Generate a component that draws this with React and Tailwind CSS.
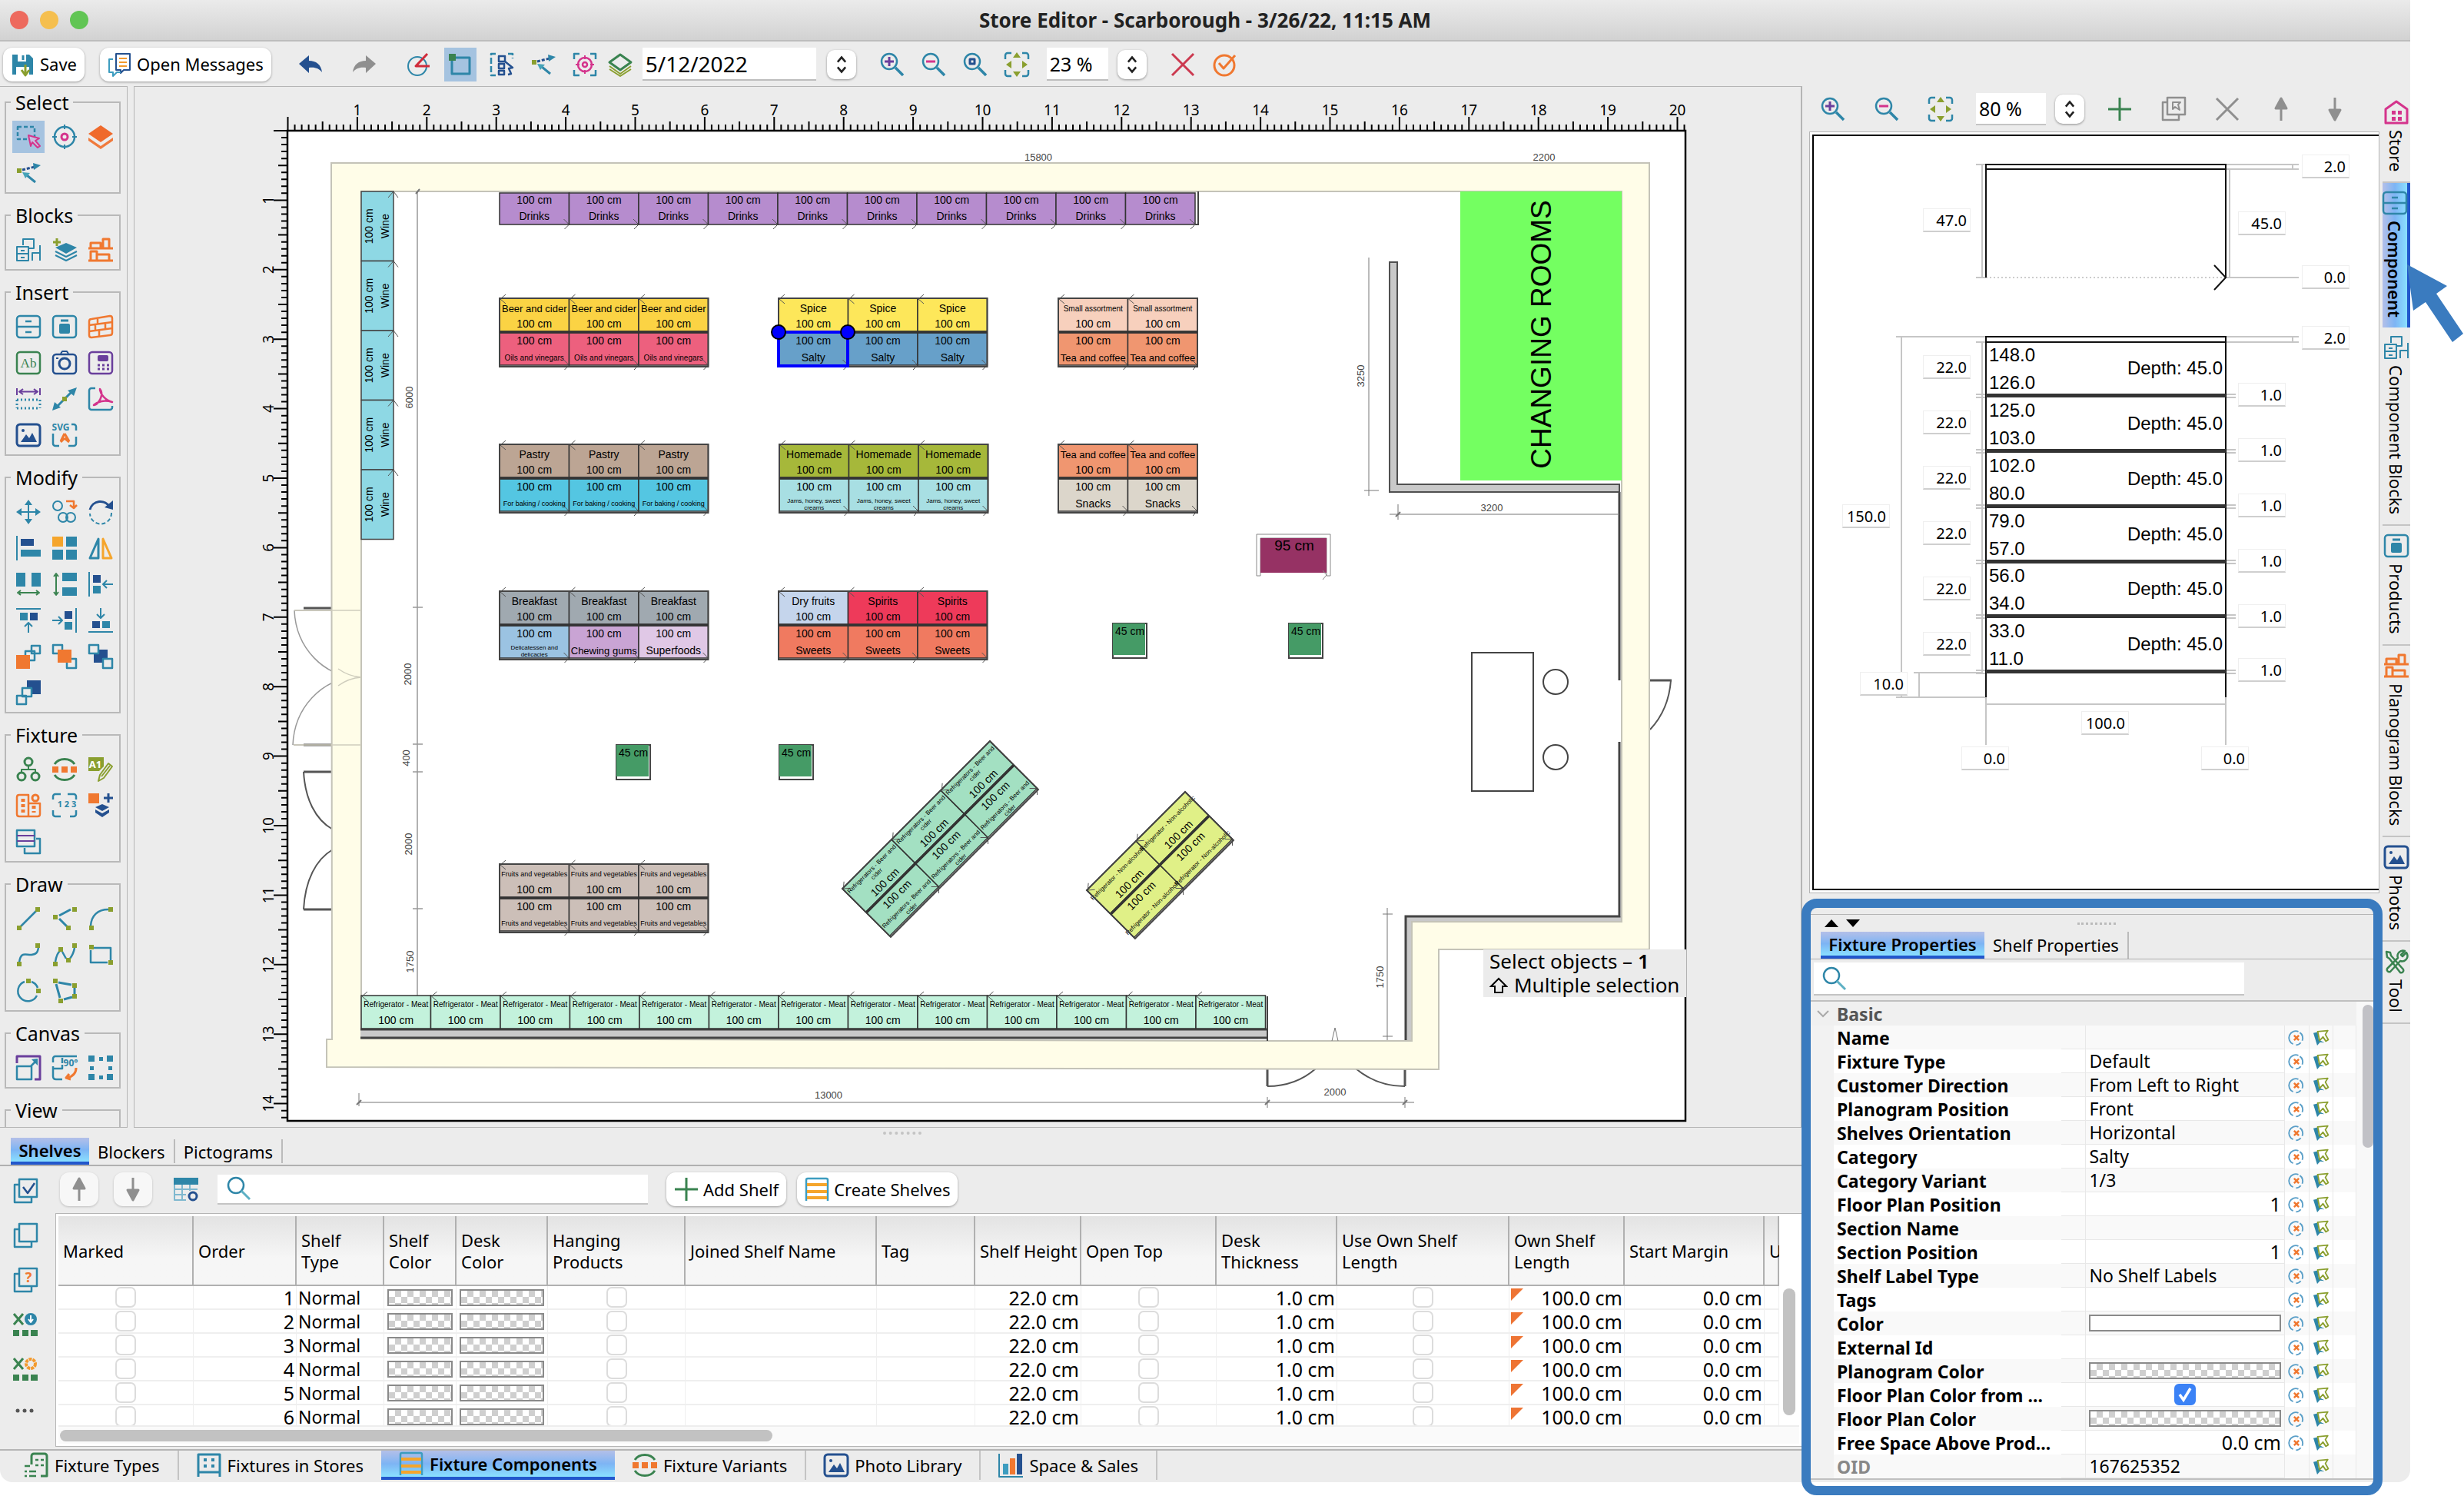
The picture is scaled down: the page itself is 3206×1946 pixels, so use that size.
import { useState } from "react";
import clsx from "clsx";

const TEAL = "#2e86a8";
const NAVY = "#24508f";
const ORANGE = "#f07830";
const GREEN = "#3a8350";
const OLIVE = "#8a9f2f";
const PURPLE = "#6a3f9c";
const PINK = "#d4348c";
const GRAY = "#8f8f8f";

// small square handle used by the drawing tools
const dot = (x, y, c = OLIVE) => <rect x={x - 3} y={y - 3} width="6" height="6" fill={c} stroke="none" />;

const ICONS = {
  save: (
    <>
      <path d="M2 3h22l5 5v21H2z" fill={TEAL} stroke="none" />
      <path d="M9 2h11v10H9zM7 19h17v12H7z" fill="#fff" stroke="none" />
      <path d="M16 4v6" stroke={TEAL} strokeWidth="3" />
      <path d="M19 16v13M14 23l5 7 5-7" stroke={OLIVE} strokeWidth="3" />
    </>
  ),
  messages: (
    <>
      <path d="M11 2h18v21h-8l-4 4v-4h-6z" stroke={NAVY} />
      <path d="M7 9H2v17h5v5l5-5h5" stroke="#3d9dc0" />
      <path d="M15 8h10M15 13h10M15 18h10" stroke="#f39a2e" />
    </>
  ),
  undo: <path d="M1 15L14 4v7c9 0 16 5 17 15-4-5-9-7-17-6v7z" fill="#24508f" stroke="none" />,
  redo: <path d="M31 15L18 4v7C9 11 2 16 1 26c4-5 9-7 17-6v7z" fill={GRAY} stroke="none" />,
  protractor: (
    <>
      <circle cx="14" cy="18" r="12" stroke={TEAL} />
      <path d="M27 2L12 18h18" stroke="#d02b3a" strokeWidth="3" />
    </>
  ),
  grid: (
    <>
      <path d="M5 7h23v21H5z" stroke={TEAL} strokeWidth="3" />
      <rect x="1" y="2" width="9" height="9" fill={GREEN} stroke="none" />
    </>
  ),
  snap: (
    <>
      <path d="M8 2H2v28h6M24 2h6v6" stroke={TEAL} strokeDasharray="8 3" strokeWidth="2.500" />
      <path d="M12 5h8v7h-8zM12 15h7v6h-7zM12 24h7v5h-7z" stroke={NAVY} strokeWidth="2.500" />
      <path d="M20 12l10 8-5 1 3 7-4 1" stroke={NAVY} strokeWidth="2.500" />
    </>
  ),
  arrows: (
    <>
      <path d="M8 12l16-4" stroke={NAVY} strokeDasharray="4 2" strokeWidth="3" />
      <path d="M22 3l10 3-9 6z" fill={TEAL} stroke="none" />
      {dot(4, 13)}
      <path d="M14 19l11 9" stroke={TEAL} strokeWidth="3" />
      <path d="M8 15l10 1-6 7z" fill="#45a3b8" stroke="none" />
    </>
  ),
  focus: (
    <>
      <path d="M2 9V2h7M23 2h7v7M30 23v7h-7M9 30H2v-7" stroke={TEAL} strokeWidth="2.500" />
      <circle cx="16" cy="16" r="9" stroke={PINK} strokeWidth="2.500" />
      <circle cx="16" cy="16" r="3" stroke={PINK} strokeWidth="2.500" />
      <path d="M16 4v5M16 23v5M4 16h5M23 16h5" stroke={PINK} />
    </>
  ),
  layers: (
    <>
      <path d="M16 3l14 10-14 10L2 13z" stroke={GREEN} strokeWidth="3" />
      <path d="M2 18l14 10 14-10M2 22l14 9 14-9" stroke={OLIVE} />
    </>
  ),
  zoomIn: (
    <>
      <circle cx="12" cy="12" r="10" stroke={TEAL} strokeWidth="2.500" />
      <path d="M20 20l10 10" stroke={TEAL} strokeWidth="3.500" />
      <path d="M6 12h12M12 6v12" stroke={PURPLE} strokeWidth="3" />
    </>
  ),
  zoomOut: (
    <>
      <circle cx="12" cy="12" r="10" stroke={TEAL} strokeWidth="2.500" />
      <path d="M20 20l10 10" stroke={TEAL} strokeWidth="3.500" />
      <path d="M6 12h12" stroke={PINK} strokeWidth="3" />
    </>
  ),
  zoomBox: (
    <>
      <circle cx="12" cy="12" r="10" stroke={TEAL} strokeWidth="2.500" />
      <path d="M20 20l10 10" stroke={TEAL} strokeWidth="3.500" />
      <path d="M9 9h6v6H9z" stroke={NAVY} strokeWidth="3" />
    </>
  ),
  fit: (
    <>
      <path d="M1 9V4a3 3 0 013-3h5M23 1h5a3 3 0 013 3v5M31 23v5a3 3 0 01-3 3h-5M9 31H4a3 3 0 01-3-3v-5" stroke={TEAL} strokeWidth="2.500" />
      <path d="M16 0l5 7H11zM16 32l5-7H11zM2 16l7-5v10zM30 16l-7-5v10z" fill={OLIVE} stroke="none" />
    </>
  ),
  cross: <path d="M2 2l28 28M30 2L2 30" stroke="#cc3a50" strokeWidth="3" />,
  crossGray: <path d="M2 2l28 28M30 2L2 30" stroke={GRAY} strokeWidth="3" />,
  check: (
    <>
      <circle cx="16" cy="17" r="13" stroke={ORANGE} strokeWidth="3" />
      <path d="M9 14l6 7L30 4" stroke={ORANGE} strokeWidth="3" />
    </>
  ),
  selectBox: (
    <>
      <path d="M2 3h22v16H2z" stroke={TEAL} strokeDasharray="5 3" strokeWidth="2.500" />
      <path d="M16 14l14 4-5 3 6 7-3 2-7-7-2 5z" fill="#c9bde0" stroke={PINK} />
    </>
  ),
  target: (
    <>
      <circle cx="16" cy="16" r="13" stroke={TEAL} strokeWidth="2.500" />
      <circle cx="16" cy="16" r="4" stroke={PINK} strokeWidth="3" />
      <path d="M16 0v6M16 26v6M0 16h6M26 16h6" stroke={TEAL} />
    </>
  ),
  stack: (
    <>
      <path d="M16 1l16 11-16 11L0 12z" fill="#ef6a2c" stroke="none" />
      <path d="M0 17l16 11 16-11v4L16 32 0 21z" fill="#f07a3c" stroke="none" />
    </>
  ),
  blockFixtures: (
    <>
      <path d="M1 12h15v18H1zM1 21h15M6 17h5M6 26h5" stroke={TEAL} />
      <path d="M9 10V2h14v12h-6M21 30V20h10V10M31 20v10" stroke={TEAL} />
    </>
  ),
  addStack: (
    <>
      <path d="M6 1v10M1 6h10" stroke={OLIVE} strokeWidth="3" />
      <path d="M18 7l14 6-14 8-14-8z" fill={TEAL} stroke="none" />
      <path d="M4 18l14 7 14-7M4 23l14 7 14-7" stroke={TEAL} />
    </>
  ),
  planoBlock: (
    <>
      <path d="M0 14h32M0 30h32" stroke={ORANGE} strokeWidth="3" />
      <path d="M3 13V7h13v6M19 13V2h8v11M3 29V18h8v11M11 29v-7h16v7" stroke={ORANGE} strokeWidth="3" />
    </>
  ),
  cabinet: (
    <>
      <rect x="1" y="2" width="30" height="28" rx="4" stroke={TEAL} strokeWidth="2.500" />
      <path d="M1 16h30M12 9h8M12 23h8" stroke={TEAL} strokeWidth="2.500" />
    </>
  ),
  product: (
    <>
      <rect x="1" y="2" width="30" height="28" rx="4" stroke={TEAL} strokeWidth="2.500" />
      <rect x="9" y="12" width="14" height="13" rx="2" fill={TEAL} stroke="none" />
      <path d="M11 8h10" stroke={TEAL} strokeWidth="3" />
    </>
  ),
  wall: (
    <>
      <path d="M4 6l24-4q3 0 3 3v19q0 3-3 3L4 30q-3 0-3-3V9q0-3 3-3z" stroke={ORANGE} strokeWidth="2.500" />
      <path d="M1 14l30-4M1 22l30-4M12 6v6M22 12v7M9 14v7M14 21v8" stroke={ORANGE} strokeWidth="2.500" />
    </>
  ),
  text: (
    <>
      <rect x="1" y="2" width="30" height="28" rx="4" stroke={GREEN} strokeWidth="2.500" />
      <text x="16" y="22" fontSize="17" textAnchor="middle" fill={GREEN} stroke="none" fontFamily="Liberation Serif, serif">Ab</text>
    </>
  ),
  camera: (
    <>
      <rect x="1" y="5" width="30" height="25" rx="4" stroke={NAVY} strokeWidth="2.500" />
      <path d="M11 4l2-3h6l2 3" stroke={NAVY} />
      <circle cx="16" cy="17" r="7" stroke={NAVY} strokeWidth="3" />
      <path d="M5 10h3" stroke={NAVY} />
    </>
  ),
  register: (
    <>
      <rect x="1" y="2" width="30" height="28" rx="4" stroke={PURPLE} strokeWidth="2.500" />
      <rect x="12" y="6" width="14" height="8" rx="2" fill={PURPLE} stroke="none" />
      <path d="M12 19h15M12 24h15" stroke={PURPLE} strokeWidth="3" strokeDasharray="3 3" />
    </>
  ),
  measure: (
    <>
      <path d="M1 2v9M31 2v9M5 6.500h22M9 3L4 6.500 9 10M23 3l5 3.500L23 10" stroke={PURPLE} />
      <path d="M1 17h30M1 28h30M1 17v11M31 17v11" stroke={TEAL} strokeDasharray="2 3" strokeWidth="3" />
    </>
  ),
  connector: (
    <>
      <path d="M5 27L27 5" stroke={TEAL} strokeWidth="3" />
      <path d="M32 1l-4 11-8-7zM0 31l3-11 8 7z" fill={TEAL} stroke="none" />
      {dot(16, 16)}
    </>
  ),
  pdf: (
    <>
      <path d="M9 2H4a3 3 0 00-3 3v22a3 3 0 003 3h24a3 3 0 003-3v-2" stroke={TEAL} strokeWidth="2.500" />
      <path d="M15 3c6 8-2 20-8 21 5-5 14-7 24-4-8-2-16-10-16-17z" stroke={PINK} strokeWidth="2.500" />
    </>
  ),
  image: (
    <>
      <rect x="1" y="2" width="30" height="28" rx="4" stroke={NAVY} strokeWidth="3" />
      <path d="M6 25l7-10 4 5 4-7 6 12z" fill={NAVY} stroke="none" />
      <circle cx="9" cy="10" r="2" fill={NAVY} stroke="none" />
    </>
  ),
  svg: (
    <>
      <text x="11" y="10" fontSize="12" textAnchor="middle" fontWeight="700" fill={TEAL} stroke="none" fontFamily="Noto Sans, sans-serif">SVG</text>
      <path d="M25 2h3a3 3 0 013 3v5M31 18v9a3 3 0 01-3 3h-7M9 30H4a3 3 0 01-3-3V14" stroke={TEAL} strokeWidth="2.500" />
      <path d="M16 14l-5 10M16 14l6 10M16 20l-5 5M16 20l6 5" stroke={ORANGE} strokeWidth="3" />
    </>
  ),
  move: (
    <>
      <path d="M16 4v24M4 16h24" stroke={TEAL} />
      <path d="M16 0l5 7H11zM16 32l5-7H11zM0 16l7-5v10zM32 16l-7-5v10z" fill={TEAL} stroke="none" />
    </>
  ),
  duplicate: (
    <>
      <circle cx="7" cy="8" r="6" stroke={TEAL} />
      <circle cx="14" cy="23" r="6" stroke={TEAL} />
      <circle cx="24" cy="23" r="6" stroke={TEAL} />
      <path d="M18 2h10v8M23 7l5 4 4-4" stroke={ORANGE} strokeWidth="2.500" />
    </>
  ),
  rotate: (
    <>
      <path d="M2 13A14 14 0 0128 10" stroke={NAVY} strokeWidth="3" />
      <path d="M32 1v12l-11-3z" fill={NAVY} stroke="none" />
      <path d="M30 17A14 14 0 012 18" stroke={TEAL} strokeDasharray="5 3" />
    </>
  ),
  alignLeft: (
    <>
      <path d="M1 0v32" stroke={TEAL} />
      <rect x="6" y="4" width="17" height="9" fill={NAVY} stroke="none" />
      <rect x="6" y="18" width="26" height="9" fill={TEAL} stroke="none" />
    </>
  ),
  tiles: (
    <>
      <rect x="0" y="1" width="14" height="13" fill="#f5a52c" stroke="none" />
      <path d="M18 1h14v13H18zM0 18h14v13H0zM18 18h14v13H18z" fill={TEAL} stroke="none" />
    </>
  ),
  mirror: (
    <>
      <path d="M13 4v25H2z" stroke={TEAL} strokeWidth="3" />
      <path d="M19 4v25h11z" stroke="#f5a52c" strokeWidth="3" />
    </>
  ),
  spreadH: (
    <>
      <path d="M0 1h12v18H0zM20 1h12v18H20z" fill={TEAL} stroke="none" />
      <path d="M4 27h24M6 24l-4 3 4 3M26 24l4 3-4 3" stroke={GREEN} />
    </>
  ),
  spreadV: (
    <>
      <path d="M13 1h19v11H13zM13 20h19v11H13z" fill={TEAL} stroke="none" />
      <path d="M5 4v24M2 6l3-4 3 4M2 26l3 4 3-4" stroke={GREEN} />
    </>
  ),
  pushLeft: (
    <>
      <path d="M1 0v32M32 16H20M24 11l-5 5 5 5" stroke={TEAL} />
      <rect x="6" y="4" width="10" height="10" fill={NAVY} stroke="none" />
      <rect x="6" y="18" width="10" height="10" fill={TEAL} stroke="none" />
    </>
  ),
  pushTop: (
    <>
      <path d="M0 1h32M16 32V20M11 24l5-5 5 5" stroke={TEAL} />
      <rect x="5" y="6" width="10" height="10" fill={TEAL} stroke="none" />
      <rect x="18" y="6" width="10" height="10" fill={NAVY} stroke="none" />
    </>
  ),
  pushRight: (
    <>
      <path d="M31 0v32M0 16h12M8 11l5 5-5 5" stroke={TEAL} />
      <rect x="16" y="4" width="10" height="10" fill={NAVY} stroke="none" />
      <rect x="16" y="18" width="10" height="10" fill={TEAL} stroke="none" />
    </>
  ),
  pushBottom: (
    <>
      <path d="M0 31h32M16 0v12M11 8l5 5 5-5" stroke={TEAL} />
      <rect x="5" y="17" width="10" height="9" fill={NAVY} stroke="none" />
      <rect x="18" y="17" width="10" height="9" fill={TEAL} stroke="none" />
    </>
  ),
  toFront: (
    <>
      <path d="M20 2h11v10H20zM12 9h12v12H12z" stroke={TEAL} strokeWidth="2.500" />
      <rect x="0" y="14" width="18" height="18" fill={ORANGE} stroke="none" />
    </>
  ),
  forward: (
    <>
      <path d="M1 1h12v11H1zM19 19h12v12H19z" stroke={TEAL} strokeWidth="2.500" />
      <rect x="7" y="7" width="18" height="17" fill={ORANGE} stroke="none" />
    </>
  ),
  backward: (
    <>
      <rect x="7" y="7" width="18" height="17" fill={NAVY} stroke="none" />
      <path d="M1 1h12v11H1zM19 19h12v12H19z" stroke={TEAL} fill="#ececec" strokeWidth="2.500" />
    </>
  ),
  toBack: (
    <>
      <rect x="14" y="0" width="18" height="18" fill={NAVY} stroke="none" />
      <path d="M8 10h12v11H8zM1 20h12v11H1z" stroke={TEAL} fill="#ececec" strokeWidth="2.500" />
    </>
  ),
  hierarchy: (
    <>
      <circle cx="16" cy="6" r="5" stroke={GREEN} strokeWidth="3" />
      <circle cx="7" cy="25" r="5" stroke={GREEN} strokeWidth="3" />
      <circle cx="25" cy="25" r="5" stroke={GREEN} strokeWidth="3" />
      <path d="M16 11v5M7 20v-4h18v4" stroke={GREEN} />
    </>
  ),
  variants: (
    <>
      <path d="M3 9a15 13 0 0126 0M3 23a15 13 0 0026 0" stroke={GREEN} strokeWidth="3" />
      <path d="M0 12h8v8H0zM12 12h8v8h-8zM24 12h8v8h-8z" fill={ORANGE} stroke="none" />
    </>
  ),
  rename: (
    <>
      <path d="M0 0h20v12l-6 6H0z" fill={OLIVE} stroke="none" />
      <text x="9" y="14" fontSize="13" fontWeight="700" textAnchor="middle" fill="#fff" stroke="none" fontFamily="Noto Sans, sans-serif">A1</text>
      <path d="M26 8L15 23l-2 8 7-4L31 12z" stroke={OLIVE} fill="#ececec" />
      <path d="M28 11L17 25" stroke={OLIVE} />
    </>
  ),
  building: (
    <>
      <path d="M4 2h12v28H4q-3 0-3-3V5q0-3 3-3zM16 13h15v14q0 3-3 3H16" stroke={ORANGE} strokeWidth="2.500" />
      <path d="M9 7v18" stroke={ORANGE} strokeWidth="5" strokeDasharray="4 3" />
      <path d="M23 16v9" stroke={ORANGE} strokeWidth="5" strokeDasharray="4 3" />
      <circle cx="25" cy="6" r="4" stroke={ORANGE} strokeWidth="3" />
    </>
  ),
  numbers: (
    <>
      <path d="M1 8V4a3 3 0 013-3h7M20 1h8a3 3 0 013 3v4M31 22v5a3 3 0 01-3 3h-5M11 30H4a3 3 0 01-3-3v-5" stroke={TEAL} strokeWidth="2.500" />
      <text x="19" y="18" fontSize="11" textAnchor="middle" fontWeight="700" fill={TEAL} stroke="none" fontFamily="Noto Sans, sans-serif">1 2 3</text>
    </>
  ),
  addLayer: (
    <>
      <rect x="0" y="0" width="14" height="13" fill={ORANGE} stroke="none" />
      <path d="M26 0v12M20 6h12" stroke={NAVY} strokeWidth="3" />
      <path d="M18 14l9 4-9 5-9-5zM9 21l9 5 9-5v4l-9 6-9-6z" fill={NAVY} stroke="none" />
    </>
  ),
  copyFixture: (
    <>
      <path d="M1 1h23v21H1z" stroke={TEAL} strokeWidth="2.500" />
      <path d="M1 8h23M1 15h23" stroke={PURPLE} />
      <path d="M26 12h5v19H11v-7" stroke={TEAL} strokeWidth="2.500" />
    </>
  ),
  line: <><path d="M6 26L26 6" stroke={TEAL} strokeWidth="2.500" />{dot(4, 28)}{dot(28, 4)}</>,
  polyline: <><path d="M9 12l15-8M9 16l10 10" stroke={TEAL} strokeWidth="3" />{dot(4, 14)}{dot(29, 4)}{dot(21, 28)}</>,
  arc: <><path d="M3 25C4 12 12 4 26 4" stroke={TEAL} strokeWidth="2.500" />{dot(4, 28)}{dot(29, 4)}</>,
  curve: <><path d="M4 26c2-16 10-9 16-10 8-1 8-5 9-9" stroke={TEAL} strokeWidth="2.500" />{dot(4, 28)}{dot(28, 4)}</>,
  spline: <><path d="M4 25c1-6 2-11 6-14M13 12l5 9M23 21c3-4 5-8 6-14" stroke={TEAL} strokeWidth="2.500" />{dot(4, 28)}{dot(11, 9)}{dot(21, 23)}{dot(29, 4)}</>,
  rect: <><path d="M3 10v16h22M7 7h22v16" stroke={TEAL} strokeWidth="2.500" />{dot(4, 6)}{dot(29, 26)}</>,
  circle: <><path d="M11 4a13 13 0 1016 18M20 4a13 13 0 018 8" stroke={TEAL} strokeWidth="2.500" />{dot(16, 3)}{dot(29, 16)}</>,
  polygon: <><path d="M8 5l17 3M5 7l5 18M15 27l11-3M29 12v10" stroke={TEAL} strokeWidth="3" />{dot(4, 3)}{dot(29, 9)}{dot(29, 23)}{dot(11, 29)}</>,
  resize: (
    <>
      <path d="M1 10V1h30v30h-7" stroke={PURPLE} strokeWidth="3" />
      <path d="M1 14h19v17H1zM19 14l7-7" stroke={TEAL} strokeWidth="2.500" />
      <path d="M28 4v9l-8-8z" fill={TEAL} stroke="none" />
    </>
  ),
  rotate90: (
    <>
      <path d="M1 9V4a3 3 0 013-3h28M13 3v7M1 17h12v-5M1 17v10q0 4 4 4h8M1 17v-3" stroke={TEAL} strokeWidth="2.500" />
      <text x="24" y="14" fontSize="12" fontWeight="700" textAnchor="middle" fill={TEAL} stroke="none" fontFamily="Noto Sans, sans-serif">90°</text>
      <path d="M31 16c0 7-4 11-11 13M22 24l-4 5 6 2" stroke={ORANGE} strokeWidth="3" />
    </>
  ),
  handles: (
    <>
      <path d="M0 0h8v8H0zM24 0h8v8h-8zM0 24h8v8H0zM24 24h8v8h-8z" fill={TEAL} stroke="none" />
      <path d="M14 2h5v5h-5zM2 14h5v5H2zM26 14h5v5h-5zM14 26h5v5h-5z" fill={TEAL} stroke="none" />
    </>
  ),
  up: <path d="M16 31V14M16 2l-7 13h14z" stroke={GRAY} strokeWidth="3" fill={GRAY} />,
  down: <path d="M16 1v17M16 30L9 17h14z" stroke={GRAY} strokeWidth="3" fill={GRAY} />,
  plus: <path d="M16 1v30M1 16h30" stroke={GREEN} strokeWidth="3" />,
  copyGray: (
    <>
      <path d="M8 1h23v22H8zM8 7H2v23h21v-6" stroke={GRAY} strokeWidth="2.500" />
      <path d="M15 7v9l3-3 6 4-2-7 3-3z" stroke={GRAY} />
    </>
  ),
  house: (
    <>
      <path d="M2 30V12L16 2l14 10v18z" stroke={PINK} strokeWidth="3" />
      <path d="M10 14h5v5h-5zM18 14h5v5h-5zM10 22h5v5h-5zM18 22h5v5h-5z" fill={PINK} stroke="none" />
    </>
  ),
  tools: (
    <>
      <path d="M3 3l5 1 1 4 16 18a3 3 0 01-4 4L7 12 4 10z" stroke={GREEN} strokeWidth="2.500" />
      <path d="M29 4l-5 5-2-2 5-5a7 7 0 00-9 9L4 25a3 3 0 004 4l13-14a7 7 0 009-9z" stroke={GREEN} strokeWidth="2.500" />
    </>
  ),
  pageCheck: (
    <>
      <path d="M8 1h23v23H8zM8 8H2v23h22v-6" stroke={TEAL} strokeWidth="2.500" />
      <path d="M13 11l6 8 9-13" stroke={NAVY} strokeWidth="2.500" />
    </>
  ),
  page: <path d="M8 1h23v23H8zM8 8H2v23h22v-6" stroke={TEAL} strokeWidth="2.500" />,
  pageHelp: (
    <>
      <path d="M8 1h23v23H8zM8 8H2v23h22v-6" stroke={TEAL} strokeWidth="2.500" />
      <text x="20" y="19" fontSize="18" fontWeight="700" textAnchor="middle" fill={ORANGE} stroke="none" fontFamily="Noto Sans, sans-serif">?</text>
    </>
  ),
  excelImport: (
    <>
      <path d="M1 2l12 14M13 2L1 16" stroke={GREEN} strokeWidth="3" />
      <circle cx="23" cy="9" r="8" fill={TEAL} stroke="none" />
      <path d="M23 4v8M20 9l3 4 3-4" stroke="#fff" />
      <path d="M0 23h8v8H0zM12 23h8v8h-8zM23 23h9v8h-9z" fill={GREEN} stroke="none" />
    </>
  ),
  excelConfig: (
    <>
      <path d="M1 2l12 14M13 2L1 16" stroke={GREEN} strokeWidth="3" />
      <circle cx="23" cy="9" r="6" stroke="#f39a2e" strokeWidth="4" strokeDasharray="4 1" />
      <path d="M0 23h8v8H0zM12 23h8v8h-8zM23 23h9v8h-9z" fill={GREEN} stroke="none" />
    </>
  ),
  dots: (
    <g fill="#555" stroke="none">
      <circle cx="6" cy="12" r="2.500" />
      <circle cx="15" cy="12" r="2.500" />
      <circle cx="24" cy="12" r="2.500" />
    </g>
  ),
  tableConfig: (
    <>
      <rect x="0" y="1" width="32" height="9" fill={TEAL} stroke="none" />
      <path d="M1 10v20h15M1 16h30M1 23h15M11 10v20M21 10v8" stroke="#7fb8cf" />
      <circle cx="25" cy="25" r="5" stroke={NAVY} strokeWidth="3" />
    </>
  ),
  search: (
    <>
      <circle cx="12" cy="12" r="10" stroke={TEAL} strokeWidth="2.500" />
      <path d="M19 19l11 11" stroke="#5db0c4" strokeWidth="3" />
    </>
  ),
  shelf: (
    <>
      <path d="M2 31V4a2 2 0 012-2h24a2 2 0 012 2v27" stroke="#3d9dc0" strokeWidth="2.500" />
      <path d="M3 10h26M3 19h26M3 27h26" stroke="#f5a52c" strokeWidth="4" />
    </>
  ),
  fixtureTypes: (
    <>
      <path d="M10 15V4a3 3 0 013-3h14a3 3 0 013 3v26h-8" stroke={GREEN} strokeWidth="3" />
      <path d="M15 9h4M22 9h4M15 16h4M22 16h4M1 17h7M1 24h3M7 24h9M1 30h3M7 30h9" stroke={GREEN} strokeWidth="2.500" />
    </>
  ),
  fixturesStores: (
    <>
      <path d="M2 31V2h28v29M2 25h28" stroke={TEAL} strokeWidth="3" />
      <path d="M9 9h4M19 9h4M9 17h4M19 17h4" stroke={TEAL} strokeWidth="4" />
    </>
  ),
  chart: (
    <>
      <path d="M1 1v30h31" stroke={TEAL} />
      <rect x="6" y="14" width="7" height="14" fill="#3d9dc0" stroke="none" />
      <rect x="15" y="7" width="7" height="21" fill={ORANGE} stroke="none" />
      <rect x="24" y="1" width="7" height="27" fill={NAVY} stroke="none" />
    </>
  ),
  reset: (
    <>
      <path d="M9 29A14 14 0 0120 3M23 5a14 14 0 015 17M25 26a14 14 0 01-10 5" stroke="#5a9fc8" strokeWidth="3" />
      <path d="M11 11l10 10M21 11L11 21" stroke={ORANGE} strokeWidth="4" />
    </>
  ),
  pick: (
    <>
      <path d="M0 6l9-2 2 16 12 6-9-1-6 7z" fill={TEAL} stroke="none" />
      <path d="M9 3l21-2-5 8 6 11-5 3-6-9-7 8z" fill="#fff" stroke={OLIVE} strokeWidth="3" />
    </>
  ),
};

function Icon({ name, className = "size-8" }) {
  return (
    <svg viewBox="0 0 32 32" fill="none" strokeWidth="2" strokeLinejoin="round" aria-hidden="true" className={clsx("shrink-0 overflow-visible", className)}>
      {ICONS[name]}
    </svg>
  );
}

function IconButton({ name, selected, label = name, className = "h-11 w-[42px]" }) {
  return (
    <button aria-label={label} className={clsx("flex shrink-0 items-center justify-center", className, selected && "bg-[#a5c3e0]")}>
      <Icon name={name} />
    </button>
  );
}

function PushButton({ icon, children }) {
  return (
    <button className="flex h-11 shrink-0 items-center gap-1.5 rounded-xl bg-white px-2.5 text-[22px] shadow-[0_1px_3px_rgba(0,0,0,0.35)]">
      {icon && <Icon name={icon} />}
      {children}
    </button>
  );
}

function Stepper({ label }) {
  return (
    <button aria-label={label} className="flex h-[38px] w-[38px] shrink-0 items-center justify-center rounded-[10px] bg-white shadow-[0_1px_3px_rgba(0,0,0,0.4)]">
      <svg viewBox="0 0 16 28" className="h-6 w-4" fill="none" stroke="#222" strokeWidth="3">
        <path d="M2 10l6-7 6 7M2 18l6 7 6-7" />
      </svg>
    </button>
  );
}

/* ---------- top bars ---------- */

function TitleBar() {
  return (
    <header className="flex h-[54px] shrink-0 items-center border-b-2 border-[#bdbdbd] bg-linear-to-b from-[#ebebeb] to-[#d2d2d2] px-[13px]">
      <div className="flex flex-1 gap-[15px]">
        <button aria-label="Close" className="size-6 rounded-full bg-[#ed6a5e]" />
        <button aria-label="Minimize" className="size-6 rounded-full bg-[#f5bf4f]" />
        <button aria-label="Zoom" className="size-6 rounded-full bg-[#61c554]" />
      </div>
      <h1 className="text-[26px] font-bold text-[#222]">Store Editor - Scarborough - 3/26/22, 11:15 AM</h1>
      <div className="flex-1" />
    </header>
  );
}

function MainToolbar() {
  const [date, setDate] = useState("5/12/2022");
  const [zoom, setZoom] = useState("23 %");
  return (
    <div className="flex h-[58px] shrink-0 items-center pt-px pl-1">
      <PushButton icon="save">Save</PushButton>
      <div className="w-5" />
      <PushButton icon="messages">Open Messages</PushButton>
      <div className="flex gap-7 pl-[30px]">
        <IconButton name="undo" />
        <IconButton name="redo" />
      </div>
      <div className="flex gap-3 pl-[29px]">
        {["protractor", "grid", "snap", "arrows", "focus"].map((n) => (
          <IconButton key={n} name={n} selected={n === "grid"} />
        ))}
      </div>
      <IconButton name="layers" className="h-11 w-[50px]" />
      <input aria-label="Date" value={date} onChange={(e) => setDate(e.target.value)} className="mr-3.5 ml-1 h-[43px] w-[226px] border-b-2 border-[#bdbdbd] bg-white px-1 text-[28px]" />
      <Stepper label="Change date" />
      <div className="flex gap-3 pr-[18px] pl-[26px]">
        {["zoomIn", "zoomOut", "zoomBox", "fit"].map((n) => (
          <IconButton key={n} name={n} />
        ))}
      </div>
      <input aria-label="Zoom" value={zoom} onChange={(e) => setZoom(e.target.value)} className="mr-3 h-[43px] w-20 border-b-2 border-[#bdbdbd] bg-white px-1 text-[25px]" />
      <Stepper label="Change zoom" />
      <div className="flex gap-3 pl-[26px]">
        <IconButton name="cross" />
        <IconButton name="check" />
      </div>
    </div>
  );
}

/* ---------- left palette ---------- */

const PALETTE = [
  { title: "Select", icons: ["selectBox", "target", "stack", "arrows"] },
  { title: "Blocks", icons: ["blockFixtures", "addStack", "planoBlock"] },
  { title: "Insert", icons: ["cabinet", "product", "wall", "text", "camera", "register", "measure", "connector", "pdf", "image", "svg"] },
  {
    title: "Modify",
    icons: ["move", "duplicate", "rotate", "alignLeft", "tiles", "mirror", "spreadH", "spreadV", "pushLeft", "pushTop", "pushRight", "pushBottom", "toFront", "forward", "backward", "toBack"],
  },
  { title: "Fixture", icons: ["hierarchy", "variants", "rename", "building", "numbers", "addLayer", "copyFixture"] },
  { title: "Draw", icons: ["line", "polyline", "arc", "curve", "spline", "rect", "circle", "polygon"] },
  { title: "Canvas", icons: ["resize", "rotate90", "handles"] },
  { title: "View", icons: ["zoomBox", "grid", "layers"] },
];

function Palette() {
  return (
    <aside className="mr-2 flex w-[166px] shrink-0 flex-col gap-3 overflow-hidden border-t border-r border-b border-[#b5b5b5] pt-1 pr-2 pl-1.5">
      {PALETTE.map((group) => (
        <fieldset key={group.title} className="shrink-0 border-2 border-[#b9b9b9] pb-1">
          <legend className="ml-1.5 px-1.5 text-[25px] leading-8">{group.title}</legend>
          <div className="grid grid-cols-[42px_42px_42px] gap-[5px] pt-2 pl-2">
            {group.icons.map((n) => (
              <IconButton key={n} name={n} selected={n === "selectBox"} className="size-[42px]" />
            ))}
          </div>
        </fieldset>
      ))}
    </aside>
  );
}

/* ---------- floor plan ---------- */

const M = 90.5; // one metre on screen

// cell: [label, fill, font size, second line]
function Cells({ y, h, cells, flip, labelY, cmY }) {
  return cells.map(([label, fill, size, more], i) => (
    <g key={i} transform={`translate(${i * M} ${y})`}>
      <rect width={M} height={h} fill={fill} stroke="#333" strokeWidth="1.500" />
      <path d={flip ? `M${M - 7} ${h - 7}l7 7-6 6` : "M8 -5l-7 6 7 6"} fill="none" stroke="#555" />
      <text x={M / 2} y={cmY} fontSize="14">100 cm</text>
      <text x={M / 2} y={more ? labelY - 4 : labelY} fontSize={size}>{label}</text>
      {more && <text x={M / 2} y={labelY + 5} fontSize={size}>{more}</text>}
    </g>
  ));
}

function Gondola({ x, y, top, bottom, angle = 0 }) {
  const w = top.length * M;
  return (
    <g transform={`translate(${x} ${y}) rotate(${angle})`}>
      <Cells y={0} h={43} cells={top} labelY={13} cmY={33} />
      <Cells y={45} h={42} cells={bottom} flip labelY={32} cmY={10} />
      <rect width={w} height="89" fill="none" stroke="#444" strokeWidth="2" />
      <path d={`M0 44h${w}`} stroke="#333" strokeWidth="3" />
    </g>
  );
}

const fill = (n, cell) => Array.from({ length: n }, () => cell);

const GONDOLAS = [
  { x: 650, y: 388, top: fill(3, ["Beer and cider", "#fbd344", 13]), bottom: fill(3, ["Oils and vinegars", "#ed607e", 10]) },
  { x: 1013, y: 388, top: fill(3, ["Spice", "#fde75a", 14]), bottom: fill(3, ["Salty", "#67a0c9", 14]) },
  { x: 1377, y: 388, top: fill(2, ["Small assortment", "#f7d0bd", 10]), bottom: fill(2, ["Tea and coffee", "#f09670", 13]) },
  { x: 650, y: 578, top: fill(3, ["Pastry", "#bca594", 14]), bottom: fill(3, ["For baking / cooking", "#54c6e2", 9]) },
  { x: 1014, y: 578, top: fill(3, ["Homemade", "#a6b83a", 14]), bottom: fill(3, ["Jams, honey, sweet", "#a8dfe3", 8, "creams"]) },
  { x: 1377, y: 578, top: fill(2, ["Tea and coffee", "#f09670", 13]), bottom: fill(2, ["Snacks", "#dcd6cb", 14]) },
  {
    x: 650, y: 769, top: fill(3, ["Breakfast", "#a0a9b0", 14]),
    bottom: [["Delicatessen and", "#9bc3e2", 8, "delicacies"], ["Chewing gums", "#c9a4d4", 13], ["Superfoods", "#e0c8e6", 14]],
  },
  {
    x: 1013, y: 769, top: [["Dry fruits", "#c5d5ec", 14], ["Spirits", "#ee3a5a", 14], ["Spirits", "#ee3a5a", 14]],
    bottom: fill(3, ["Sweets", "#f07a60", 14]),
  },
  { x: 650, y: 1124, top: fill(3, ["Fruits and vegetables", "#ccbfb8", 9]), bottom: fill(3, ["Fruits and vegetables", "#ccbfb8", 9]) },
  {
    x: 1096, y: 1156, angle: -45, top: fill(3, ["Refrigerators - Beer and", "#a3e0c2", 8, "cider"]),
    bottom: fill(3, ["Refrigerators - Beer and", "#a3e0c2", 8, "cider"]),
  },
  { x: 1414, y: 1158, angle: -45, top: fill(2, ["Refrigerator - Non-alcoholic", "#e0f087", 8]), bottom: fill(2, ["Refrigerator - Non-alcoholic", "#e0f087", 8]) },
];

const BINS = [[1448, 811], [1677, 811], [802, 969], [1014, 969]];

// [text, x, y, vertical]
const DIMENSIONS = [
  ["15800", 1351, 204], ["2200", 2009, 204], ["3200", 1941, 660], ["13000", 1078, 1424], ["2000", 1737, 1420],
  ["6000", 532, 517, true], ["2000", 530, 877, true], ["400", 528, 986, true], ["2000", 531, 1098, true],
  ["1750", 533, 1251, true], ["3250", 1770, 489, true], ["1750", 1795, 1271, true],
];

function Rulers() {
  const ticksX = Array.from({ length: 202 }, (_, i) => i);
  const ticksY = Array.from({ length: 143 }, (_, i) => i);
  const len = (i) => (i % 10 === 0 ? 17 : i % 5 === 0 ? 11 : 7);
  return (
    <g stroke="#000" strokeWidth="2">
      <path d={ticksX.map((i) => `M${374.5 + i * 9.04} 169v-${len(i)}`).join("")} />
      <path d={ticksY.map((i) => `M373 ${170 + i * 9.04}h-${len(i)}`).join("")} />
      <g stroke="none" fontFamily="Noto Sans, sans-serif" fontSize="19">
        {Array.from({ length: 20 }, (_, i) => (
          <text key={i} x={374.5 + (i + 1) * 90.4} y="143">{i + 1}</text>
        ))}
        {Array.from({ length: 14 }, (_, i) => (
          <text key={i} transform={`translate(349 ${170 + (i + 1) * 90.4}) rotate(-90)`}>{i + 1}</text>
        ))}
      </g>
    </g>
  );
}

function FloorPlan() {
  return (
    <section className="relative min-w-0 flex-1 overflow-hidden border border-r-2 border-[#b5b5b5]">
      <svg className="absolute inset-0 h-full w-full" fontFamily="Liberation Sans, Arial, sans-serif" textAnchor="middle" dominantBaseline="central">
        <g transform="translate(-175 -113)">
          <rect x="374" y="170" width="1819" height="1288" fill="#fff" stroke="#000" strokeWidth="2.500" />
          <Rulers />

          {/* doors */}
          <g fill="none" stroke="#555">
            <path d="M383 794h87M382 969h88M383 794c2 50 40 86 80 87-45 2-80 40-82 88M543 249v1091M537 790h13M537 968h13M537 1004h13M537 1182h13M537 1339h13" stroke="#999" strokeWidth="1.500" />
            <path d="M395 791h38M395 969h38M395 1004h38M395 1183h38M2147 885h28M1649 1391v22M1828 1391v22" strokeWidth="3" />
            <path d="M395 1004c2 35 15 62 38 75M433 1105c-22 13-36 40-38 78M2174 885c-2 28-12 48-27 64M1649 1413c26 0 46-8 63-23M1828 1413c-26 0-46-8-64-23" strokeWidth="2" />
          </g>

          {/* walls */}
          <path d="M431 212H2146V1235H1872V1391L425 1388V1352H432ZM470 249V1351L1649 1354H1837V1199H2110V249Z" fill="#fffde8" stroke="#c4c3b8" strokeWidth="2" fillRule="evenodd" />
          <path d="M383 794h87M382 969h88M440 870q14 10 30 11-16 1-30 11" fill="none" stroke="#cfcdbd" strokeWidth="1.500" />
          <path d="M469 1339H1649V1351H469Z" fill="#c9c9c9" />
          <path d="M469 1339H1650M469 1350H1649" stroke="#444" strokeWidth="3" />
          <path d="M1649 1296v58" stroke="#444" strokeWidth="2" />
          <path d="M1829 1192H2109V1198H1836V1353H1829Z" fill="#c9c9c9" />
          <path d="M1829 1353V1192H2107V965M2107 885V640" fill="none" stroke="#444" strokeWidth="3" />
          <rect x="1900" y="249" width="210" height="376" fill="#74ff61" />
          <path d="M1808 341H1818V630H2107V640H1808Z" fill="#c9c9c9" stroke="#505050" strokeWidth="2" />
          <text transform="translate(2005 435) rotate(-90)" fontSize="37">CHANGING ROOMS</text>

          {/* dimension lines */}
          <g stroke="#777" fill="none">
            <path d="M1781 335v310M1775 638h19M1808 669h299M1819 656v20M1805 1181v172M1799 1189h13M1799 1348h13M467 1434h1373M467 1422v17M1649 1427v14M1828 1427v14M1733 1354l4-17 4 17" />
            <path d="M541 252l5-6M464 1437l6-6M1646 1437l6-6M1825 1437l6-6M1816 672l6-6" strokeWidth="2" />
          </g>
          <g fontSize="13" fill="#444">
            {DIMENSIONS.map(([t, x, y, v], i) => (
              <text key={i} transform={`translate(${x} ${y}) rotate(${v ? -90 : 0})`}>{t}</text>
            ))}
          </g>

          {/* wall fixtures */}
          <g transform="translate(650 251)">
            <Cells y={0} h={41} cells={fill(10, ["Drinks", "#b68cce", 14])} flip labelY={30} cmY={9} />
            <path d={`M${M * 10} 41h4V-2`} fill="none" stroke="#444" strokeWidth="2" />
          </g>
          <g transform="translate(470 1295)">
            <Cells y={0} h={43} cells={fill(13, ["Refrigerator - Meat", "#c3f2dc", 10])} labelY={11} cmY={32} />
          </g>
          {[0, 1, 2, 3, 4].map((i) => (
            <g key={i} transform={`translate(470 ${249 + (i + 1) * M}) rotate(-90)`}>
              <rect width={M} height="42" fill="#8ed8e4" stroke="#444" strokeWidth="1.500" />
              <path d={`M${M - 8} 35l8 7-8 6`} fill="none" stroke="#555" />
              <text x={M / 2} y="10" fontSize="14">100 cm</text>
              <text x={M / 2} y="31" fontSize="14">Wine</text>
            </g>
          ))}

          {GONDOLAS.map((g, i) => <Gondola key={i} {...g} />)}

          {BINS.map(([x, y]) => (
            <g key={x} transform={`translate(${x} ${y})`}>
              <rect width="44" height="45" fill="#fff" stroke="#444" strokeWidth="2" />
              <rect width="42" height="41" fill="#459b66" />
              <text x="22" y="10" fontSize="14">45 cm</text>
            </g>
          ))}
          <path d="M1635 749V695H1731V749H1726V700H1640V749Z" fill="#fff" stroke="#888" />
          <rect x="1640" y="700" width="86" height="45" fill="#963264" />
          <path d="M1721 742l5 6-5 6" fill="none" stroke="#888" />
          <text x="1684" y="709" fontSize="19">95 cm</text>

          <g fill="#fff" stroke="#444" strokeWidth="2">
            <rect x="1915" y="849" width="80" height="180" />
            <circle cx="2024" cy="887" r="16" />
            <circle cx="2024" cy="985" r="16" />
          </g>

          {/* selection */}
          <rect x="1013" y="432" width="90" height="44" fill="none" stroke="#0000ff" strokeWidth="4" />
          <circle cx="1013" cy="432" r="9" fill="#0000ff" stroke="#000" strokeWidth="2" />
          <circle cx="1103" cy="432" r="9" fill="#0000ff" stroke="#000" strokeWidth="2" />
        </g>
      </svg>
      <div role="status" className="absolute top-[1122px] left-[1755px] w-[264px] bg-[#ebebeb] pl-2 text-[26px] leading-[31px] whitespace-nowrap">
        <p>Select objects – <span className="font-semibold">1</span></p>
        <p className="flex items-center gap-2">
          <svg viewBox="0 0 24 22" className="h-[22px] w-6" fill="none" stroke="#000" strokeWidth="2">
            <path d="M12 2L2 12h5v8h10v-8h5z" />
          </svg>
          Multiple selection
        </p>
      </div>
    </section>
  );
}

/* ---------- shelves table ---------- */

const COLUMNS = [
  ["Marked", "w-[176px]"], ["Order", "w-[134px]"], ["Shelf Type", "w-[114px]"], ["Shelf Color", "w-[94px]"],
  ["Desk Color", "w-[119px]"], ["Hanging Products", "w-[179px]"], ["Joined Shelf Name", "w-[249px]"], ["Tag", "w-[128px]"],
  ["Shelf Height", "w-[138px]"], ["Open Top", "w-[176px]"], ["Desk Thickness", "w-[157px]"], ["Use Own Shelf Length", "w-[224px]"],
  ["Own Shelf Length", "w-[150px]"], ["Start Margin", "w-[182px]"], ["U", "w-auto"],
];

const WRAPPED = ["Shelf Type", "Shelf Color", "Desk Color", "Desk Thickness", "Hanging Products", "Use Own Shelf Length", "Own Shelf Length"];

function Swatch({ checkered = true, className }) {
  return (
    <button
      aria-label="Pick color"
      className={clsx(
        "block h-[22px] w-full border-2 border-[#8a8a8a]",
        checkered ? "bg-white bg-size-[16px_16px] [background-image:repeating-conic-gradient(#cfcfcf_0_25%,#ffffff_0_50%)]" : "bg-white",
        className
      )}
    />
  );
}

function Check({ label }) {
  return <input type="checkbox" aria-label={label} className="mx-auto block size-[27px] appearance-none rounded-[7px] border-2 border-[#dcdcdc] bg-white" />;
}

function ShelfTable() {
  const cell = "border-r border-b-2 border-[#efefef] p-0";
  const num = clsx(cell, "px-0.5 text-right text-[25px]");
  return (
    <div className="flex h-[304px] flex-col border border-[#b5b5b5] bg-white p-[3px]">
      <div className="flex min-h-0 flex-1 overflow-hidden">
        <div className="min-w-0 flex-1 overflow-hidden">
          <table className="w-full table-fixed border-separate border-spacing-0">
            <thead>
              <tr className="h-[91px] bg-linear-to-b from-[#e3e3e3] to-[#f6f6f6] to-60%">
                {COLUMNS.map(([name, w]) => (
                  <th key={name} className={clsx(w, "border-r-2 border-b-2 border-[#b0b0b0] pl-1.5 text-left text-[22px] leading-7 font-normal", WRAPPED.includes(name) ? "pr-4" : "whitespace-nowrap")}>
                    {name}
                  </th>
                ))}
              </tr>
            </thead>
            <tbody className="text-[23px] leading-6">
              {[1, 2, 3, 4, 5, 6].map((n) => (
                <tr key={n} className="h-[31px]">
                  <td className={cell}><Check label={`Mark shelf ${n}`} /></td>
                  <td className={num}>{n}</td>
                  <td className={clsx(cell, "px-0.5")}>Normal</td>
                  <td className={clsx(cell, "px-1")}><Swatch /></td>
                  <td className={clsx(cell, "px-1")}><Swatch /></td>
                  <td className={cell}><Check label="Hanging products" /></td>
                  <td className={cell} />
                  <td className={cell} />
                  <td className={num}>22.0 cm</td>
                  <td className={cell}><Check label="Open top" /></td>
                  <td className={num}>1.0 cm</td>
                  <td className={cell}><Check label="Use own shelf length" /></td>
                  <td className={num}>
                    <div className="flex justify-between">
                      <svg viewBox="0 0 16 16" className="size-4" fill="#ee7434"><path d="M0 0h16L0 16z" /></svg>
                      100.0 cm
                    </div>
                  </td>
                  <td className={num}>0.0 cm</td>
                  <td className={cell} />
                </tr>
              ))}
            </tbody>
          </table>
        </div>
        <div className="flex w-[26px] shrink-0 justify-center pt-[94px]">
          <div className="h-[165px] w-[16px] rounded-full bg-[#c2c2c2]" />
        </div>
      </div>
      <div className="flex h-6 shrink-0 items-center border-t-2 border-[#ededed] bg-[#fafafa] px-0.5">
        <div className="h-[15px] w-[41%] rounded-full bg-[#c2c2c2]" />
      </div>
    </div>
  );
}

const activeTab = "border-b-4 border-[#2257cc] bg-linear-to-b from-[#b3bfe8] via-[#7db4f4] to-[#8ae0ff] font-semibold";

function ShelvesPane() {
  return (
    <section className="flex shrink-0 flex-col">
      <div className="flex h-[13px] items-center justify-center pl-[2px]">
        <div className="w-[50px] border-t-4 border-dotted border-[#c4c4c4]" />
      </div>
      <div role="tablist" className="flex h-[37px] items-stretch border-b-2 border-[#b0b0b0] pl-3.5 text-[22px] leading-7">
        <button role="tab" aria-selected="true" className={clsx(activeTab, "w-[102px]")}>Shelves</button>
        <button role="tab" className="my-0.5 border-r-2 border-[#bbb] px-[11px]">Blockers</button>
        <button role="tab" className="my-0.5 border-r-2 border-[#bbb] px-[11px]">Pictograms</button>
      </div>
      <div className="flex">
        <div className="flex w-[72px] shrink-0 flex-col items-start gap-[26px] pt-4 pl-[17px]">
          {["pageCheck", "page", "pageHelp", "excelImport", "excelConfig", "dots"].map((n) => (
            <IconButton key={n} name={n} className="size-8" />
          ))}
        </div>
        <div className="min-w-0 flex-1">
          <div className="flex h-[61px] items-center pb-px pl-1.5">
            <button aria-label="Move up" className="mr-5 flex h-11 w-[50px] items-center justify-center rounded-xl bg-[#f7f7f7] shadow-[0_1px_3px_rgba(0,0,0,0.2)]"><Icon name="up" /></button>
            <button aria-label="Move down" className="mr-7 flex h-11 w-[50px] items-center justify-center rounded-xl bg-[#f7f7f7] shadow-[0_1px_3px_rgba(0,0,0,0.2)]"><Icon name="down" /></button>
            <IconButton name="tableConfig" className="size-8" />
            <label className="mr-6 ml-[25px] flex h-[39px] w-[560px] items-center border-b-2 border-[#c4c4c4] bg-white pl-3">
              <Icon name="search" />
              <input aria-label="Search shelves" className="min-w-0 flex-1 px-2 text-[22px] outline-none" />
            </label>
            <PushButton icon="plus">Add Shelf</PushButton>
            <div className="w-3.5" />
            <PushButton icon="shelf">Create Shelves</PushButton>
          </div>
          <ShelfTable />
        </div>
      </div>
    </section>
  );
}

const VIEWS = [
  ["fixtureTypes", "Fixture Types", true],
  ["fixturesStores", "Fixtures in Stores"],
  ["shelf", "Fixture Components"],
  ["variants", "Fixture Variants", true],
  ["image", "Photo Library", true],
  ["chart", "Space & Sales", true],
];

function ViewTabs() {
  return (
    <nav className="mt-[3px] flex h-[43px] shrink-0 items-start border-t-2 border-[#b5b5b5] pl-2 text-[22px]">
      {VIEWS.map(([icon, label, sep]) => (
        <button
          key={label}
          className={clsx(
            "flex h-[38px] items-center gap-2",
            icon === "shelf" ? clsx(activeTab, "px-[23px]") : "px-[23px]",
            sep && "border-r-2 border-[#c4c4c4]"
          )}
        >
          <Icon name={icon} />
          {label}
        </button>
      ))}
    </nav>
  );
}

/* ---------- component view ---------- */

const FIELDS = [
  ["2.0", 2995, 201], ["47.0", 2502, 271], ["45.0", 2912, 275], ["0.0", 2995, 345], ["2.0", 2995, 424],
  ["22.0", 2502, 462], ["22.0", 2502, 534], ["22.0", 2502, 606], ["22.0", 2502, 678], ["22.0", 2502, 750], ["22.0", 2502, 822],
  ["1.0", 2912, 498], ["1.0", 2912, 570], ["1.0", 2912, 642], ["1.0", 2912, 714], ["1.0", 2912, 786], ["1.0", 2912, 856],
  ["150.0", 2397, 656], ["10.0", 2420, 874], ["100.0", 2708, 925], ["0.0", 2552, 971], ["0.0", 2864, 971],
];

// shelf levels: upper bound, lower bound, y of the first line
const LEVELS = [
  ["148.0", "126.0", 461], ["125.0", "103.0", 533], ["102.0", "80.0", 605],
  ["79.0", "57.0", 677], ["56.0", "34.0", 748], ["33.0", "11.0", 820],
];

function ComponentCanvas() {
  return (
    <div className="min-h-0 flex-1 border border-[#b5b5b5] bg-white p-[3px] pr-0">
      <div className="relative h-full overflow-hidden border-2 border-r-0 border-black">
        <svg className="absolute inset-0 h-full w-full" fontFamily="Liberation Sans, Arial, sans-serif" dominantBaseline="central">
          <g transform="translate(-2360 -177)">
            <g stroke="#c6c6c6" strokeWidth="2" fill="none">
              <path d="M2571 214h13M2571 361h13M2579 214v147M2896 214h95M2896 220h95M2983 214v6M2901 220v141M2896 361h95" />
              <path d="M2467 438h117M2474 438v469M2467 907h117M2490 875h90M2497 875v32M2571 445h13M2579 445v430M2896 438h95M2896 445h95M2983 438v7" />
              <path d="M2584 907v62M2896 907v62M2584 916h312" />
              {LEVELS.map(([a, , y]) => (
                <path key={a} d={`M2571 ${y + 52}h13m-13 4h13M2896 ${y + 52}h13m-13 4h13`} />
              ))}
            </g>
            <path d="M2584 361H2896" stroke="#999" strokeDasharray="2 3" />
            <g stroke="#111" strokeWidth="2" fill="none">
              <path d="M2584 361V214H2896V361M2584 220H2896M2584 907V438H2896V907M2584 445H2896" strokeWidth="2" />
              <path d="M2881 345l15 16-15 16" />
            </g>
            {LEVELS.map(([hi, lo, y]) => (
              <g key={hi} fontSize="24">
                <rect x="2584" y={y + 51} width="312" height="5" fill="#333" />
                <text x="2588" y={y}>{hi}</text>
                <text x="2588" y={y + 36}>{lo}</text>
                <text x="2892" y={y + 17} textAnchor="end">Depth: 45.0</text>
              </g>
            ))}
          </g>
        </svg>
        {FIELDS.map(([value, x, y]) => (
          <input
            key={`${x}-${y}`}
            aria-label="Dimension"
            defaultValue={value}
            className="absolute h-[31px] w-[62px] border border-b-2 border-[#efefef] border-b-[#cfcfcf] bg-white pr-1 text-right text-[20px]"
            style={{ left: x - 2360, top: y - 177 }}
          />
        ))}
      </div>
    </div>
  );
}

function ComponentToolbar() {
  return (
    <div className="flex h-[59px] shrink-0 items-center pl-[10px]">
      <div className="flex gap-7">
        {["zoomIn", "zoomOut", "fit"].map((n) => <IconButton key={n} name={n} />)}
      </div>
      <input aria-label="Component zoom" defaultValue="80 %" className="mr-3 ml-[25px] h-[42px] w-[91px] border-b-2 border-[#c4c4c4] bg-white px-1 text-[25px]" />
      <Stepper label="Change component zoom" />
      <div className="flex gap-7 pl-[25px]">
        {["plus", "copyGray", "crossGray", "up", "down"].map((n) => <IconButton key={n} name={n} />)}
      </div>
    </div>
  );
}

/* ---------- properties ---------- */

const PROPERTIES = [
  ["Name", ""], ["Fixture Type", "Default"], ["Customer Direction", "From Left to Right"], ["Planogram Position", "Front"],
  ["Shelves Orientation", "Horizontal"], ["Category", "Salty"], ["Category Variant", "1/3"], ["Floor Plan Position", "1", "number"],
  ["Section Name", ""], ["Section Position", "1", "number"], ["Shelf Label Type", "No Shelf Labels"], ["Tags", ""],
  ["Color", "", "plain"], ["External Id", ""], ["Planogram Color", "", "swatch"], ["Floor Plan Color from ...", "", "check"],
  ["Floor Plan Color", "", "swatch"], ["Free Space Above Prod...", "0.0 cm", "number"], ["OID", "167625352", "readonly"],
];

function PropertyValue({ name, value, type }) {
  const [checked, setChecked] = useState(true);
  if (type === "plain") return <Swatch checkered={false} />;
  if (type === "swatch") return <Swatch />;
  if (type === "check") {
    return (
      <label className="relative mx-auto block size-7">
        <input type="checkbox" aria-label={name} checked={checked} onChange={() => setChecked(!checked)} className="peer block size-7 appearance-none rounded-md border-2 border-[#ccc] bg-white checked:border-[#3b82f6] checked:bg-[#3b82f6]" />
        <svg viewBox="0 0 28 28" className="pointer-events-none absolute inset-0 hidden peer-checked:block" fill="none" stroke="#fff" strokeWidth="3.500">
          <path d="M7 14l5 7 9-15" />
        </svg>
      </label>
    );
  }
  return value;
}

function Properties() {
  return (
    <section className="relative mt-[27px] shrink-0 border-t border-[#b5b5b5]">
      <div className="flex h-[22px] items-center gap-2.5 pl-5">
        <svg viewBox="0 0 18 10" className="h-2.5 w-[18px]"><path d="M0 10h18L9 0z" /></svg>
        <svg viewBox="0 0 18 10" className="h-2.5 w-[18px]"><path d="M0 0h18L9 10z" /></svg>
        <div className="flex flex-1 justify-center pr-[70px]">
          <div className="w-[50px] border-t-3 border-dotted border-[#bbb]" />
        </div>
      </div>
      <div role="tablist" className="flex h-9 items-stretch border-b border-[#b0b0b0] pl-[15px] text-[22px]">
        <button role="tab" aria-selected="true" className={clsx(activeTab, "w-[213px]")}>Fixture Properties</button>
        <button role="tab" className="border-r-2 border-[#bbb] px-[11px]">Shelf Properties</button>
      </div>
      <div className="h-[55px] border-b-2 border-[#c0c0c0] pt-1 pl-1.5">
        <label className="flex h-[43px] w-[560px] items-center border-b-2 border-[#c4c4c4] bg-white pl-[11px]">
          <Icon name="search" />
          <input aria-label="Search properties" className="min-w-0 flex-1 px-2 text-[22px] outline-none" />
        </label>
      </div>
      <div className="flex pr-2">
        <table className="min-w-0 flex-1 table-fixed border-separate border-spacing-0 text-[23px] leading-[30px]">
          <thead>
            <tr className="h-[31px] bg-[#f0f0f0] text-left">
              <th className="w-8">
                <svg viewBox="0 0 16 10" className="ml-2.5 h-2.5 w-4" fill="none" stroke="#aaa" strokeWidth="2"><path d="M1 1l7 7 7-7" /></svg>
              </th>
              <th className="w-[296px] pl-1 text-[#555]">Basic</th>
              <th className="w-8" />
              <th className="w-[258px]" />
              <th className="w-8" />
              <th className="w-[31px]" />
              <th className="w-[30px]" />
            </tr>
          </thead>
          <tbody>
            {PROPERTIES.map(([name, value, type]) => (
              <tr key={name} className="h-[31px] odd:bg-[#f9f9f9] even:bg-white">
                <td className="bg-[#f2f2f2] p-0" />
                <th scope="row" className={clsx("overflow-hidden p-0 pl-1 text-left whitespace-nowrap", type === "readonly" && "text-[#888]")}>{name}</th>
                <td className="border-r border-b border-[#e8e8e8] p-0" />
                <td className={clsx("border-r border-b border-[#e8e8e8] px-1 py-0", type === "number" && "text-right text-[25px]")}>
                  <PropertyValue name={name} value={value} type={type} />
                </td>
                <td className="border-r border-[#e8e8e8] p-0">
                  {type !== "readonly" && <button aria-label={`Reset ${name}`} className="mx-auto block size-5"><Icon name="reset" className="size-5" /></button>}
                </td>
                <td className="border-r border-[#e8e8e8] p-0">
                  <button aria-label={`Pick ${name}`} className="mx-auto block size-5"><Icon name="pick" className="size-5" /></button>
                </td>
                <td className="border-r border-[#e8e8e8] p-0" />
              </tr>
            ))}
          </tbody>
        </table>
        <div className="w-[22px] shrink-0 bg-[#f8f8f8] pt-1 pl-2">
          <div className="h-[186px] w-3.5 rounded-full bg-[#c1c1c6]" />
        </div>
      </div>
      <div className="h-[5px] border-t-2 border-[#c0c0c0]" />
      {/* highlight around the panel */}
      <div className="pointer-events-none absolute -top-[21px] -right-1 -bottom-[17px] -left-[10px] z-10 rounded-[20px] border-[12px] border-[#3a7bbf]" />
    </section>
  );
}

const SIDE_TABS = [
  ["house", "Store"], ["cabinet", "Component"], ["blockFixtures", "Component Blocks"], ["product", "Products"],
  ["planoBlock", "Planogram Blocks"], ["image", "Photos"], ["tools", "Tool"],
];

function SideTabs() {
  return (
    <nav className="flex w-10 shrink-0 flex-col items-start pt-2 pl-1">
      {SIDE_TABS.map(([icon, label]) => {
        const active = label === "Component";
        return (
          <button
            key={label}
            className={clsx(
              "flex w-9 flex-col items-center gap-[7px] pt-2.5 pb-[13px] text-[22px] leading-7",
              active ? "border-r-4 border-[#2257cc] bg-linear-to-r from-[#b3bfe8] via-[#7db4f4] to-[#8ae0ff] font-semibold" : "border-b-2 border-[#c4c4c4]",
              label === "Store" && "border-b-0"
            )}
          >
            <Icon name={icon} />
            <span className="[writing-mode:vertical-rl]">{label}</span>
          </button>
        );
      })}
    </nav>
  );
}

export default function App() {
  return (
    <div className="relative flex h-screen flex-col overflow-hidden bg-white pr-[70px] pb-[18px] font-['Noto_Sans','Open_Sans',sans-serif] text-black">
      <div className="flex min-h-0 flex-1 flex-col rounded-b-2xl bg-[#ececec]">
        <TitleBar />
        <MainToolbar />
        <main className="flex min-h-0 flex-1">
          <div className="flex min-w-0 flex-1 flex-col">
            <div className="flex min-h-0 flex-1">
              <Palette />
              <FloorPlan />
            </div>
            <ShelvesPane />
            <ViewTabs />
          </div>
          <div className="relative flex w-[791px] shrink-0 pl-[9px]">
            <div className="flex min-w-0 flex-1 flex-col">
              <ComponentToolbar />
              <ComponentCanvas />
              <Properties />
            </div>
            <SideTabs />
            {/* pointer to the Component tab */}
            <svg viewBox="0 0 74 102" className="pointer-events-none absolute top-[232px] -right-[70px] h-[102px] w-[74px]" fill="#3a7bbf">
              <path d="M0 0l52 28-14 10 35 52-14 11-35-52-16 11z" />
            </svg>
          </div>
        </main>
      </div>
    </div>
  );
}
